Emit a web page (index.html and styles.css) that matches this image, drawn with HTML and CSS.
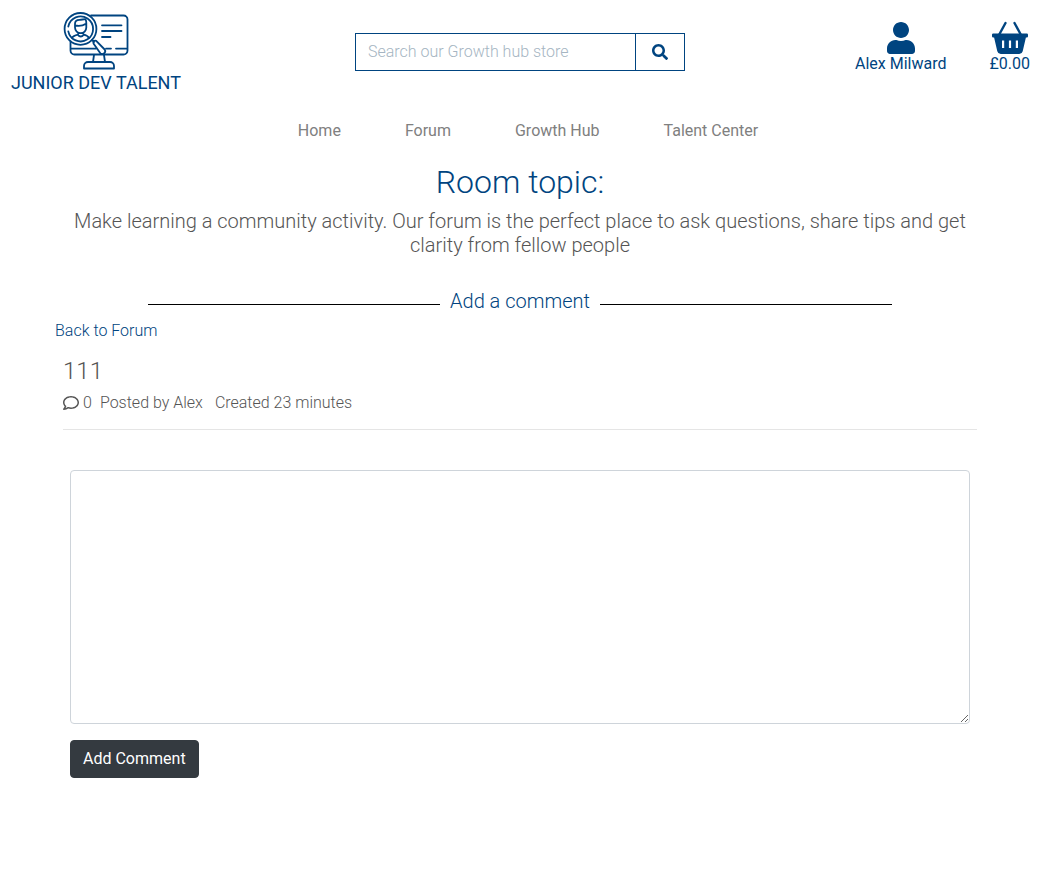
FILE: index.html
```html
<!DOCTYPE html>
<html lang="en">
<head>
<meta charset="utf-8">
<meta name="viewport" content="width=device-width, initial-scale=1">
<title>Junior Dev Talent - Forum</title>
<link rel="stylesheet" href="styles.css">
</head>
<body>
<header class="header">
  <a class="brand" href="#">
    <svg class="brand-logo" viewBox="0 0 68 60" fill="none" stroke="currentColor" stroke-width="1.8" stroke-linecap="round" stroke-linejoin="round" aria-hidden="true">
      <path d="M29 5.500h32.500a4 4 0 0 1 4 4v31a4 4 0 0 1-4 4h-49a4 4 0 0 1-4-4v-9M9 38.600h25M44 38.600h5M54 38.600h11"/>
      <path d="M40 15.300h19.500M40 21h19.500M40 27h8.500"/>
      <path d="M32 45l-1 7M42 45l1 7M26 52h22a4 4 0 0 1 4 4v2.500h-30v-2.500a4 4 0 0 1 4-4z"/>
      <circle cx="18.500" cy="18.900" r="15.900"/>
      <path d="M6.300 16.500A12.500 12.500 0 1 1 6.300 21.300"/>
      <path d="M13 13.800c0-2.800 1.800-4 4.500-4 2 0 4-.6 6-.6 1 1.500.8 3 .8 5v3.300c0 3.200-2.500 5.700-5.600 5.700S13 20.700 13 17.500zM13.300 15.500c4 .8 7.500.3 10.700-1.700M16 23.500v1.500c1.500 2 4 2 5.500 0v-1.500M10 28c1-2 3.500-2.800 6-3.300M27 28c-1-2-3-2.800-5.500-3.300"/>
      <path d="M30 30l2 2M31.500 33.500c-.8-1.800.8-3.500 2.700-2.700l8.500 8.700c1.800 2.800-1.500 5.800-4.200 4z"/>
    </svg>
    <span>JUNIOR DEV TALENT</span>
  </a>
  <form class="search" role="search">
    <input class="search-input" type="search" placeholder="Search our Growth hub store" aria-label="Search our Growth hub store">
    <button class="search-button" type="button" aria-label="Search">
      <svg class="search-icon" viewBox="0 0 512 512" fill="currentColor" aria-hidden="true"><path d="M505 442.700L405.300 343c-4.500-4.500-10.600-7-17-7H372c27.600-35.300 44-79.700 44-128C416 93.100 322.900 0 208 0S0 93.100 0 208s93.100 208 208 208c48.300 0 92.700-16.400 128-44v16.300c0 6.400 2.500 12.500 7 17l99.700 99.700c9.400 9.400 24.600 9.400 33.900 0l28.300-28.300c9.400-9.400 9.400-24.600.1-34zM208 336c-70.700 0-128-57.200-128-128 0-70.700 57.200-128 128-128 70.700 0 128 57.200 128 128 0 70.700-57.200 128-128 128z"/></svg>
    </button>
  </form>
  <div class="account">
    <a class="account-link" href="#">
      <svg class="user-icon" viewBox="0 0 448 512" fill="currentColor" aria-hidden="true"><path d="M224 256c70.700 0 128-57.300 128-128S294.700 0 224 0 96 57.300 96 128s57.300 128 128 128zm89.600 32h-16.700c-22.200 10.200-46.900 16-72.900 16s-50.600-5.800-72.900-16h-16.700C60.200 288 0 348.200 0 422.400V464c0 26.500 21.500 48 48 48h352c26.500 0 48-21.500 48-48v-41.600c0-74.200-60.200-134.400-134.400-134.400z"/></svg>
      <span>Alex Milward</span>
    </a>
    <a class="account-link" href="#">
      <svg class="basket-icon" viewBox="0 0 36 32" aria-hidden="true">
        <path d="M13.500 1L7.500 12M22.500 1l6 11" fill="none" stroke="currentColor" stroke-width="2.400" stroke-linecap="round"/>
        <path fill="currentColor" fill-rule="evenodd" d="M1.200 11.500h33.600a1.200 1.200 0 0 1 1.200 1.200v1.600a1.200 1.200 0 0 1-1.200 1.200h-.9l-3.200 13.700a3.500 3.500 0 0 1-3.400 2.700H8.700a3.500 3.500 0 0 1-3.400-2.700L2.100 15.500h-.9A1.200 1.200 0 0 1 0 14.300v-1.600a1.200 1.200 0 0 1 1.200-1.200zM10 18.500v7.500h2.200v-7.500zM16.900 18.500v7.500h2.200v-7.500zM23.800 18.500v7.500h2.200v-7.500z"/>
      </svg>
      <span>£0.00</span>
    </a>
  </div>
</header>
<nav class="nav" aria-label="Main">
  <a href="#">Home</a>
  <a href="#">Forum</a>
  <a href="#">Growth Hub</a>
  <a href="#">Talent Center</a>
</nav>
<main class="container">
  <h1 class="title">Room topic:</h1>
  <p class="intro">Make learning a community activity. Our forum is the perfect place to ask questions, share tips and get clarity from fellow people</p>
  <h2 class="divider">Add a comment</h2>
  <a class="back" href="#">Back to Forum</a>
  <article class="post">
    <h3 class="post-title">111</h3>
    <p class="meta">
      <svg class="comment-icon" viewBox="0 0 512 512" fill="currentColor" aria-hidden="true"><path d="M256 32C114.600 32 0 125.100 0 240c0 47.600 19.900 91.200 52.900 126.300C38 405.700 7 439.100 6.500 439.500c-6.600 7-8.400 17.200-4.600 26S14.400 480 24 480c61.500 0 110-25.700 139.100-46.300C192 442.800 223.200 448 256 448c141.400 0 256-93.100 256-208S397.400 32 256 32zm0 368c-26.700 0-53.100-4.100-78.400-12.100l-22.700-7.200-19.500 13.800c-14.300 10.100-33.900 21.400-57.500 29 7.300-12.100 14.400-25.700 19.900-40.200l10.600-28.100-20.600-21.800C69.700 314.100 48 282.200 48 240c0-88.200 93.300-160 208-160s208 71.800 208 160-93.300 160-208 160z"/></svg>
      <span class="count">0</span>
      <span class="author">Posted by Alex</span>
      <span>Created 23 minutes</span>
    </p>
  </article>
  <form class="comment-form">
    <textarea class="comment-box" rows="10" aria-label="Comment"></textarea>
    <button class="submit" type="button">Add Comment</button>
  </form>
</main>
</body>
</html>
```
FILE: styles.css
```css
* {
  box-sizing: border-box;
}

body {
  margin: 0;
  padding-right: 20px;
  background: #fff;
  color: #555;
  font: 300 16px/24px Roboto, "Liberation Sans", sans-serif;
}

a {
  color: #004480;
  text-decoration: none;
}

svg {
  display: block;
}

.header {
  display: grid;
  grid-template-columns: 1fr 330px 1fr;
  gap: 24px;
  align-items: start;
  padding: 10px 11px 0;
}

.brand {
  display: flex;
  flex-direction: column;
  align-items: center;
  justify-self: start;
  font-size: 18px;
  font-weight: 400;
  line-height: 26px;
}

.brand-logo {
  width: 68px;
  height: 60px;
}

.search {
  display: flex;
  height: 38px;
  margin-top: 23px;
}

.search-input {
  flex: 1;
  min-width: 0;
  padding: 6px 12px;
  border: 1px solid #004480;
  border-radius: 0;
  background: #fff;
  color: #004480;
  font: inherit;
  appearance: none;
}

.search-input::placeholder {
  color: #a5b5c2;
  opacity: 1;
}

.search-button {
  display: grid;
  place-items: center;
  width: 50px;
  margin-left: -1px;
  padding: 0;
  border: 1px solid #004480;
  background: #fff;
  color: #004480;
}

.search-icon {
  width: 16px;
  height: 16px;
}

.account {
  display: flex;
  justify-content: flex-end;
  gap: 43px;
  padding-top: 12px;
  margin-right: -1px;
}

.account-link {
  display: flex;
  flex-direction: column;
  align-items: center;
  font-weight: 400;
  line-height: 20px;
}

.user-icon {
  width: 28px;
  height: 32px;
}

.basket-icon {
  width: 36px;
  height: 32px;
  overflow: visible;
}

.nav {
  display: flex;
  justify-content: center;
  gap: 64px;
  padding: 23px 0 0 16px;
}

.nav a {
  color: #808080;
  font-weight: 400;
}

.container {
  max-width: 960px;
  margin: 0 auto;
  padding: 20px 15px 40px;
}

.title {
  margin: 0 0 8px;
  color: #004480;
  font-size: 32px;
  font-weight: 300;
  line-height: 38px;
  text-align: center;
}

.intro {
  margin: 0 0 32px;
  font-size: 20px;
  line-height: 24px;
  text-align: center;
}

.divider {
  display: flex;
  align-items: center;
  gap: 10px;
  width: 80%;
  margin: 0 auto 6px;
  color: #004480;
  font-size: 20px;
  font-weight: 300;
  line-height: 24px;
}

.divider::before,
.divider::after {
  content: "";
  flex: 1;
  height: 1px;
  margin-top: 6px;
  background: #000;
}

.post {
  margin: 14px 8px 0;
  padding-bottom: 14px;
  border-bottom: 1px solid #e5e5e5;
}

.post-title {
  margin: 0 0 6px;
  font-size: 24px;
  font-weight: 300;
  line-height: 28px;
}

.meta {
  display: flex;
  align-items: center;
  margin: 0;
}

.comment-icon {
  width: 16px;
  height: 16px;
  margin-right: 4px;
}

.count {
  margin-right: 8px;
}

.author {
  margin-right: 12px;
}

.comment-form {
  padding: 40px 15px 0;
}

.comment-box {
  display: block;
  width: 100%;
  margin-bottom: 16px;
  padding: 6px 12px;
  border: 1px solid #ced4da;
  border-radius: 4px;
  color: #495057;
  font: inherit;
  resize: vertical;
}

.submit {
  padding: 6px 12px;
  border: 1px solid #343a40;
  border-radius: 4px;
  background: #343a40;
  color: #fff;
  font: inherit;
  font-weight: 400;
}
```
